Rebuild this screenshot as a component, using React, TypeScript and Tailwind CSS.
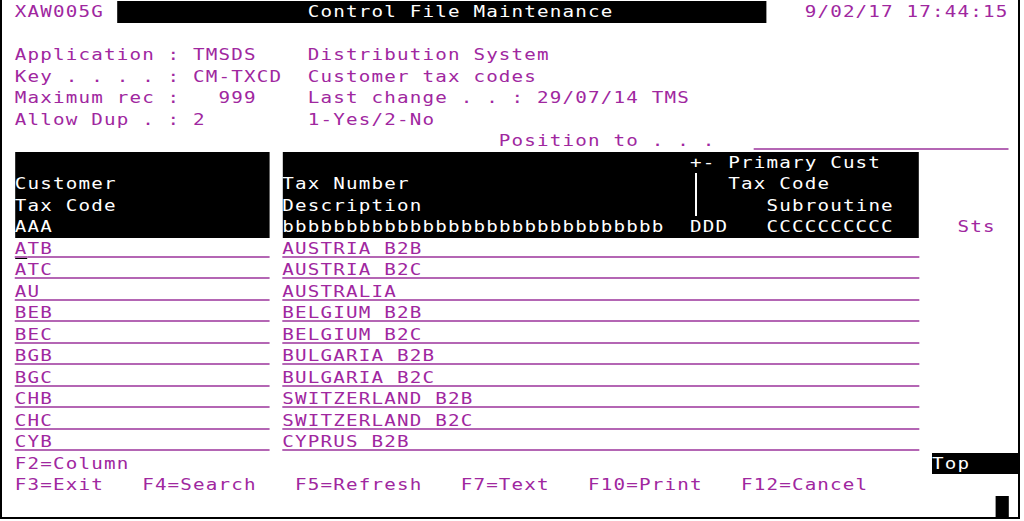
import React from "react";

const BLK = "inline-block align-top bg-black text-white";
const UL = "underline decoration-[#b466b4] decoration-2 underline-offset-[2px]";

const pad = (s: string, n: number) => s.padEnd(n, " ");
const sp = (n: number) => " ".repeat(n);

const data: [string, string][] = [
  ["ATB", "AUSTRIA B2B"],
  ["ATC", "AUSTRIA B2C"],
  ["AU", "AUSTRALIA"],
  ["BEB", "BELGIUM B2B"],
  ["BEC", "BELGIUM B2C"],
  ["BGB", "BULGARIA B2B"],
  ["BGC", "BULGARIA B2C"],
  ["CHB", "SWITZERLAND B2B"],
  ["CHC", "SWITZERLAND B2C"],
  ["CYB", "CYPRUS B2B"],
];

function Row({ children }: { children?: React.ReactNode }) {
  return <div className="h-[21.5px] leading-[21.5px]">{children}</div>;
}

function Bar() {
  return (
    <span className="inline-block align-top bg-[linear-gradient(to_right,transparent_44%,white_44%,white_56%,transparent_56%)]">
      {" "}
    </span>
  );
}

export default function App() {
  return (
    <div className="w-[1024px] h-[521px] bg-white overflow-hidden">
      <div className="w-[1020px] h-[519px] box-border border-l-2 border-r-2 border-b-2 border-black overflow-hidden">
        <div className="origin-top-left scale-x-[1.2] pt-[1px] whitespace-pre font-['DejaVu_Sans_Mono',monospace] text-[16px] tracking-[0.984px] text-[#a0279f]">
          <Row>
            <span>{" XAW005G "}</span>
            <span className={BLK}>{sp(15) + "Control File Maintenance" + sp(12)}</span>
            <span>{"   9/02/17 17:44:15"}</span>
          </Row>
          <Row />
          <Row>{" Application : TMSDS    Distribution System"}</Row>
          <Row>{" Key . . . . : CM-TXCD  Customer tax codes"}</Row>
          <Row>{" Maximum rec :   999    Last change . . : 29/07/14 TMS"}</Row>
          <Row>{" Allow Dup . : 2        1-Yes/2-No"}</Row>
          <Row>
            {sp(39) + "Position to . . ." + sp(3)}
            <span className={UL}>{sp(20)}</span>
          </Row>
          <Row>
            {" "}
            <span className={BLK}>{sp(20)}</span>
            {" "}
            <span className={BLK}>{sp(32) + "+- Primary Cust" + sp(3)}</span>
          </Row>
          <Row>
            {" "}
            <span className={BLK}>{pad("Customer", 20)}</span>
            {" "}
            <span className={BLK}>
              {pad("Tax Number", 32)}
              <Bar />
              {"  Tax Code" + sp(7)}
            </span>
          </Row>
          <Row>
            {" "}
            <span className={BLK}>{pad("Tax Code", 20)}</span>
            {" "}
            <span className={BLK}>
              {pad("Description", 32)}
              <Bar />
              {sp(5) + "Subroutine" + sp(2)}
            </span>
          </Row>
          <Row>
            {" "}
            <span className={BLK}>{pad("AAA", 20)}</span>
            {" "}
            <span className={BLK}>{"b".repeat(30) + "  DDD   " + "C".repeat(10) + "  "}</span>
            {"   Sts"}
          </Row>
          {data.map(([code, desc], i) => (
            <Row key={code}>
              {" "}
              {i === 0 ? (
                <span className={UL}>
                  <span className={"inline-block align-top h-[21.5px] box-border border-b-2 border-black " + UL}>
                    {code[0]}
                  </span>
                  {pad(code.slice(1), 19)}
                </span>
              ) : (
                <span className={UL}>{pad(code, 20)}</span>
              )}
              {" "}
              <span className={UL}>{pad(desc, 50)}</span>
            </Row>
          ))}
          <Row>
            {" F2=Column" + sp(63)}
            <span className={BLK}>{"Top    "}</span>
          </Row>
          <Row>{" F3=Exit   F4=Search   F5=Refresh   F7=Text   F10=Print   F12=Cancel"}</Row>
          <Row>
            {sp(78)}
            <span className="inline-block align-top h-[21.5px] bg-black">{" "}</span>
          </Row>
        </div>
      </div>
    </div>
  );
}
